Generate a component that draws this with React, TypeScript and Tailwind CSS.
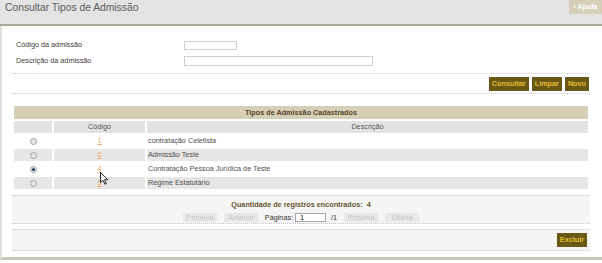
import type { ReactNode } from 'react';

interface Row {
  code: string;
  description: string;
  selected?: boolean;
}

const rows: Row[] = [
  { code: '1', description: 'contratação Celetista' },
  { code: '2', description: 'Admissão Teste' },
  { code: '4', description: 'Contratação Pessoa Jurídica de Teste', selected: true },
  { code: '5', description: 'Regime Estatutário' },
];

function Radio({ checked }: { checked?: boolean }) {
  return (
    <span className="inline-flex w-[7px] h-[7px] rounded-full border border-[#a0a0a0] bg-[#e6e6e6] items-center justify-center align-middle">
      {checked && <span className="w-[3px] h-[3px] rounded-full bg-[#233654]" />}
    </span>
  );
}

function DarkButton({ children }: { children: ReactNode }) {
  return (
    <button className="h-[14px] px-[3px] bg-[#6a5818] text-[#e6bd2e] font-bold leading-none">
      {children}
    </button>
  );
}

function PageButton({ children }: { children: ReactNode }) {
  return (
    <span className="h-[9px] w-[34px] flex items-center justify-center bg-[#e8e8e8] text-[#c6c6c6] leading-none">
      {children}
    </span>
  );
}

export default function App() {
  return (
    <div className="relative w-[602px] h-[263px] overflow-hidden bg-white text-[7.25px] text-[#404040] font-['Liberation_Sans',Arial,sans-serif]">
      {/* title bar */}
      <div className="h-[26px] bg-[#e3e3e3] border-b-2 border-[#a9a99b] flex items-start justify-between">
        <h1 className="pl-[5px] pt-[2px] text-[10.3px] leading-[12px] text-[#5b5b5b]">
          Consultar Tipos de Admissão
        </h1>
        <span className="w-[33px] h-[14px] bg-[#d7d0b8] text-white font-bold flex items-center justify-center leading-none">
          › Ajuda
        </span>
      </div>

      {/* panel */}
      <div className="h-[234px] border-l-2 border-b-[3px] border-[#e0e0d8] border-b-[#c9c9bb] pl-[10px] pr-[12px]">
        {/* search form */}
        <div className="pt-[14px] pl-[4px] flex flex-col gap-[6px]">
          <div className="flex items-center h-[10px]">
            <span className="w-[168px]">Código da admissão</span>
            <span className="w-[53px] h-[9px] border border-[#cfcfcf] bg-white" />
          </div>
          <div className="flex items-center h-[10px]">
            <span className="w-[168px]">Descrição da admissão</span>
            <span className="w-[189px] h-[10px] border border-[#cfcfcf] bg-white" />
          </div>
        </div>

        <div className="mt-[7px] border-t border-dotted border-[#c8c8c8]" />
        <div className="mt-[3px] flex justify-end gap-[3px] pr-[1px]">
          <DarkButton>Consultar</DarkButton>
          <DarkButton>Limpar</DarkButton>
          <DarkButton>Novo</DarkButton>
        </div>
        <div className="mt-[2px] border-t border-dotted border-[#c8c8c8]" />

        {/* results table */}
        <table className="mt-[10px] w-full border-separate border-spacing-x-[2px] border-spacing-y-[2px]">
          <thead>
            <tr>
              <th colSpan={3} className="h-[13px] p-0 bg-[#d6cfb7] text-[#55462a] font-bold leading-none">
                Tipos de Admissão Cadastrados
              </th>
            </tr>
            <tr className="bg-[#e2e2e2] text-[#555]">
              <th className="w-[38px] h-[12px] p-0 font-normal leading-none" />
              <th className="w-[91px] h-[12px] p-0 font-normal leading-none">Código</th>
              <th className="h-[12px] p-0 font-normal leading-none">Descrição</th>
            </tr>
          </thead>
          <tbody>
            {rows.map((row, i) => (
              <tr key={row.code} className={i % 2 === 1 ? 'bg-[#e6e6e6]' : 'bg-white'}>
                <td className="h-[12px] p-0 text-center leading-none">
                  <Radio checked={row.selected} />
                </td>
                <td className="h-[12px] p-0 text-center leading-none">
                  <a className="text-[#eea263] underline">{row.code}</a>
                </td>
                <td className="h-[12px] p-0 pl-[1px] leading-none text-[#505050]">{row.description}</td>
              </tr>
            ))}
          </tbody>
        </table>

        {/* pagination */}
        <div className="mt-[4px] h-[29px] border-y border-dotted border-[#c8c8c8] bg-[#f5f5f5] flex flex-col items-center">
          <div className="mt-[5px] font-bold text-[#66562c] leading-none">
            Quantidade de registros encontrados:&nbsp;&nbsp;4
          </div>
          <div className="mt-[5px] flex items-center gap-[7px] leading-none">
            <PageButton>Primeira</PageButton>
            <PageButton>Anterior</PageButton>
            <span className="text-[#333]">Páginas:</span>
            <span className="w-[31px] h-[9px] border border-[#a8a8a8] bg-white flex items-center pl-[4px] -ml-[5px] text-[#111]">
              1
            </span>
            <span className="-ml-[2px] text-[#333]">/1</span>
            <PageButton>Próxima</PageButton>
            <PageButton>Última</PageButton>
          </div>
        </div>

        <div className="mt-[5px] h-[22px] border-y border-dotted border-[#c8c8c8] bg-[#f5f5f5] flex items-center justify-end pr-[3px]">
          <DarkButton>Excluir</DarkButton>
        </div>
      </div>

      {/* mouse pointer */}
      <svg className="absolute left-[100px] top-[172px]" width="9" height="13" viewBox="0 0 9 13">
        <path d="M0.5 0.5 L0.5 10.5 L3 8.2 L4.8 12.2 L6.2 11.6 L4.5 7.7 L7.8 7.7 Z" fill="#fff" stroke="#111" strokeWidth="0.9" strokeLinejoin="round" />
      </svg>
    </div>
  );
}
